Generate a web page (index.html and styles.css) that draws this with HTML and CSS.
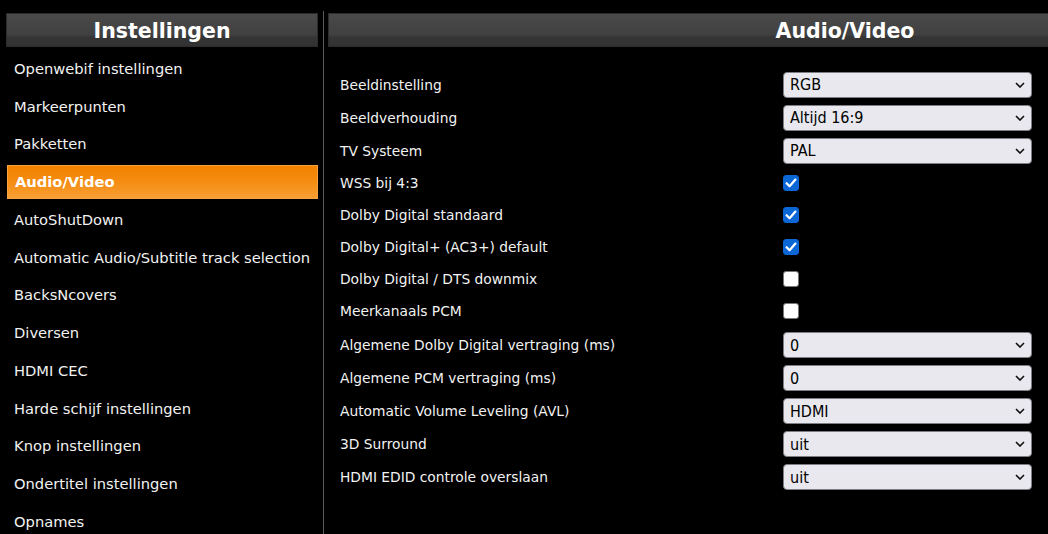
FILE: index.html
```html
<!DOCTYPE html>
<html lang="nl">
<head>
<meta charset="utf-8">
<title>Instellingen - Audio/Video</title>
<link rel="stylesheet" href="styles.css">
</head>
<body>
<div class="page">
  <aside class="sidebar">
    <div class="panel-head">Instellingen</div>
    <ul class="menu">
      <li class="item">Openwebif instellingen</li>
      <li class="item">Markeerpunten</li>
      <li class="item">Pakketten</li>
      <li class="item active">Audio/Video</li>
      <li class="item">AutoShutDown</li>
      <li class="item">Automatic Audio/Subtitle track selection</li>
      <li class="item">BacksNcovers</li>
      <li class="item">Diversen</li>
      <li class="item">HDMI CEC</li>
      <li class="item">Harde schijf instellingen</li>
      <li class="item">Knop instellingen</li>
      <li class="item">Ondertitel instellingen</li>
      <li class="item">Opnames</li>
    </ul>
  </aside>
  <main class="main">
    <div class="panel-head main-head">Audio/Video</div>
    <div class="form">
      <div class="row sel"><span class="label">Beeldinstelling</span><select class="select"><option>RGB</option></select></div>
      <div class="row sel"><span class="label">Beeldverhouding</span><select class="select"><option>Altijd 16:9</option></select></div>
      <div class="row sel"><span class="label">TV Systeem</span><select class="select"><option>PAL</option></select></div>
      <div class="row chk"><span class="label">WSS bij 4:3</span><input type="checkbox" class="check" checked></div>
      <div class="row chk"><span class="label">Dolby Digital standaard</span><input type="checkbox" class="check" checked></div>
      <div class="row chk"><span class="label">Dolby Digital+ (AC3+) default</span><input type="checkbox" class="check" checked></div>
      <div class="row chk"><span class="label">Dolby Digital / DTS downmix</span><input type="checkbox" class="check"></div>
      <div class="row chk"><span class="label">Meerkanaals PCM</span><input type="checkbox" class="check"></div>
      <div class="row sel gap"><span class="label">Algemene Dolby Digital vertraging (ms)</span><select class="select"><option>0</option></select></div>
      <div class="row sel"><span class="label">Algemene PCM vertraging (ms)</span><select class="select"><option>0</option></select></div>
      <div class="row sel"><span class="label">Automatic Volume Leveling (AVL)</span><select class="select"><option>HDMI</option></select></div>
      <div class="row sel"><span class="label">3D Surround</span><select class="select"><option>uit</option></select></div>
      <div class="row sel"><span class="label">HDMI EDID controle overslaan</span><select class="select"><option>uit</option></select></div>
    </div>
  </main>
</div>
</body>
</html>
```

FILE: styles.css
```css
html, body {
  margin: 0;
  padding: 0;
  background: #000;
  overflow: hidden;
  height: 100%;
}
body {
  font-family: "DejaVu Sans", sans-serif;
  color: #fff;
}
.page {
  display: flex;
  align-items: stretch;
  padding-top: 11px;
  height: calc(100% - 11px);
  width: 1400px;
}
.sidebar {
  width: 312px;
  padding: 0 5px 0 6px;
  border-right: 1px solid #5a5a5a;
  flex: none;
}
.panel-head {
  margin-top: 2px;
  height: 34px;
  box-sizing: border-box;
  border: 1px solid #2c2c2c;
  padding-top: 2px;
  background: linear-gradient(to bottom, #4a4a4a 0%, #404040 65%, #353535 72%, #323232 100%);
  color: #fff;
  font-family: "DejaVu Sans", sans-serif;
  font-weight: bold;
  font-size: 20.5px;
  line-height: 30px;
  text-align: center;
}
.menu {
  list-style: none;
  margin: 0;
  padding: 1px 0 0 0;
}
.item {
  height: 34px;
  margin-top: 3.75px;
  box-sizing: border-box;
  padding-left: 8px;
  line-height: 34px;
  font-size: 14.7px;
  color: #f2f2f2;
  white-space: nowrap;
}
.item.active {
  margin-left: 1px;
  padding-left: 7px;
  background: linear-gradient(to bottom, #f28100 0%, #f58d12 50%, #f89e34 100%);
  border: 1px solid #f7a240;
  line-height: 32px;
  font-weight: bold;
  color: #fff;
}
.main {
  flex: none;
  width: 1034px;
  padding-left: 4px;
}
.form {
  padding: 21px 0 0 12px;
}
.row {
  display: flex;
  align-items: center;
}
.row.sel { height: 33px; }
.row.chk { height: 32px; }
.row.gap { margin-top: 1.5px; }
.label {
  width: 443px;
  flex: none;
  font-size: 13.8px;
  color: #f2f2f2;
}
.select {
  appearance: none;
  -webkit-appearance: none;
  width: 249px;
  height: 26px;
  box-sizing: border-box;
  margin: 0;
  padding: 0 24px 0 6px;
  border: 1px solid #7d7d85;
  border-radius: 4px;
  background-color: #e9e8ee;
  background-image: url("data:image/svg+xml;utf8,<svg xmlns='http://www.w3.org/2000/svg' width='10' height='6' viewBox='0 0 10 6'><path d='M1 1 L5 5 L9 1' fill='none' stroke='%23111' stroke-width='1.6'/></svg>");
  background-repeat: no-repeat;
  background-position: right 6px center;
  font-family: "DejaVu Sans Condensed", "DejaVu Sans", sans-serif;
  font-size: 16px;
  color: #000;
}
.check {
  appearance: none;
  -webkit-appearance: none;
  width: 16px;
  height: 16px;
  margin: 0;
  box-sizing: border-box;
  border: 1px solid #767676;
  border-radius: 3px;
  background: #fff;
}
.check:checked {
  border-color: #0b66d6;
  background-color: #0b66d6;
  background-image: url("data:image/svg+xml;utf8,<svg xmlns='http://www.w3.org/2000/svg' width='16' height='16' viewBox='0 0 16 16'><path d='M3.6 8.2 L6.6 11.2 L12.4 4.6' fill='none' stroke='white' stroke-width='2.2' stroke-linecap='round' stroke-linejoin='round'/></svg>");
  background-repeat: no-repeat;
  background-position: center;
}
```
